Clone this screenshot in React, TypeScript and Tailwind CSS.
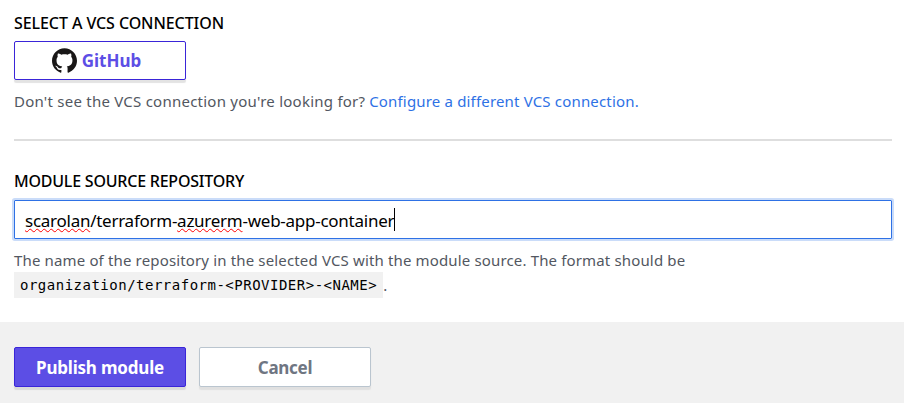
import { SiGithub } from "react-icons/si";

const misspelled = "underline decoration-[#f00] decoration-wavy decoration-1 underline-offset-1";

export default function App() {
  return (
    <main className="flex h-[403px] w-[904px] flex-col overflow-hidden bg-white font-['Noto_Sans','Open_Sans',sans-serif]">
      <section className="flex flex-col items-start px-[14px] pt-3">
        <h2 className="h-5 text-[16px] leading-[22px] font-medium tracking-[-0.08px] whitespace-nowrap text-black">SELECT A VCS CONNECTION</h2>
        <button className="mt-[9px] flex h-[39px] w-[172px] items-center justify-center gap-[5px] rounded-[2px] border border-[#3a25d8] bg-white pr-[7px] text-[17px] font-bold text-[#5c4ee5] shadow-[0_3px_1px_#e3e3e3]">
          <SiGithub className="size-[25px] text-[#191717]" />
          <span>GitHub</span>
        </button>
        <p className="mt-[9px] text-[15px] leading-6 whitespace-nowrap text-[#525761]">
          <span className="tracking-[0.24px]">Don't see the VCS connection you're looking for?</span>{" "}
          <a className="tracking-[0.17px] text-[#2e71e5]">Configure a different VCS connection.</a>
        </p>
      </section>
      <hr className="mr-3 ml-[14px] mt-[26px] border-t-2 border-[#dedede]" />
      <section className="flex flex-col pt-[29px] pr-3 pl-[14px]">
        <h2 className="h-5 text-[16px] leading-[22px] font-medium tracking-[-0.22px] whitespace-nowrap text-black">MODULE SOURCE REPOSITORY</h2>
        <div className="mt-[10px] flex h-[39px] items-center rounded-[1px] border border-[#2e71e5] px-[10px] text-[17px] whitespace-nowrap text-black shadow-[0_0_0_2px_#cadcf9]">
          <span className="pt-[2px] tracking-[-0.26px]"><span className={misspelled}>scarolan</span>/terraform-<span className={misspelled}>azurerm</span>-web-app-container</span>
          <span className="h-[23px] w-px bg-black" />
        </div>
        <p className="mt-[9px] text-[15px] leading-[25px] whitespace-nowrap text-[#525761]">
          <span className="tracking-[0.15px]">The name of the repository in the selected VCS with the module source. The format should be</span>
        </p>
        <p className="-mt-px flex text-[15px] leading-[26px] text-[#525761]">
          <code className="h-[26px] bg-[#f1f1f1] px-[6px] font-['DejaVu_Sans_Mono',monospace] text-[14px] leading-[26px] tracking-[0.5px] text-black">organization/terraform-&lt;PROVIDER&gt;-&lt;NAME&gt;</code><span>.</span>
        </p>
      </section>
      <footer className="mt-auto flex h-[81px] gap-[13px] bg-[#f1f1f1] px-[14px] pt-[25px] text-[17px] font-bold">
        <button className="h-10 w-[172px] rounded-[2px] border border-[#3a25d8] bg-[#5c4ee5] pt-px text-white shadow-[0_3px_1px_#dadada]"><span className="tracking-[-0.2px]">Publish module</span></button>
        <button className="h-10 w-[172px] rounded-[2px] border border-[#bac5cf] bg-white pt-px text-[#6f7682] shadow-[0_3px_1px_#e0e0e0]"><span className="tracking-[-0.3px]">Cancel</span></button>
      </footer>
    </main>
  );
}
